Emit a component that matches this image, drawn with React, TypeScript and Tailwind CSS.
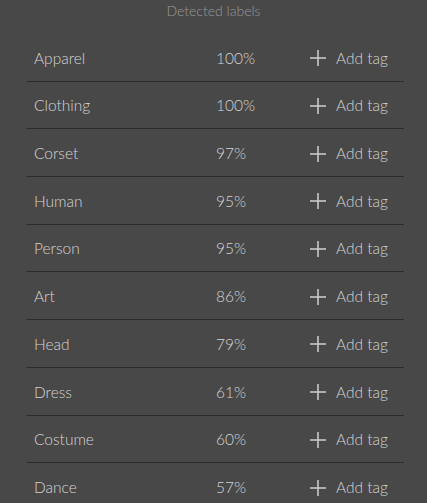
const labels: [string, string][] = [
  ["Apparel", "100%"],
  ["Clothing", "100%"],
  ["Corset", "97%"],
  ["Human", "95%"],
  ["Person", "95%"],
  ["Art", "86%"],
  ["Head", "79%"],
  ["Dress", "61%"],
  ["Costume", "60%"],
  ["Dance", "57%"],
];

function PlusIcon() {
  return (
    <svg width="18" height="18" viewBox="0 0 18 18" className="shrink-0">
      <path d="M9 1v16M1 9h16" stroke="#cfcfcf" strokeWidth="1.5" fill="none" />
    </svg>
  );
}

export default function App() {
  return (
    <div className="min-h-[503px] w-full bg-[#484848] font-['Lato','Open_Sans',sans-serif]">
      <div className="pt-[3px] text-center text-[14px] font-light leading-[16px] text-[#999999]">Detected labels</div>
      <ul className="ml-[27px] mr-[23px] mt-[15px]">
        {labels.map(([name, score], i) => (
          <li
            key={name}
            className={
              "flex h-[47.7px] items-center pl-[7px] pt-[2px] text-[15.5px] font-light text-[#d4d4d4] " +
              (i < labels.length - 1 ? "border-b border-[#2b2b2b]" : "")
            }
          >
            <span className="w-[182px]">{name}</span>
            <span className="w-[93px]">{score}</span>
            <button className="flex items-center gap-[9px] font-light text-[#d4d4d4]">
              <PlusIcon />
              <span>Add tag</span>
            </button>
          </li>
        ))}
      </ul>
    </div>
  );
}
